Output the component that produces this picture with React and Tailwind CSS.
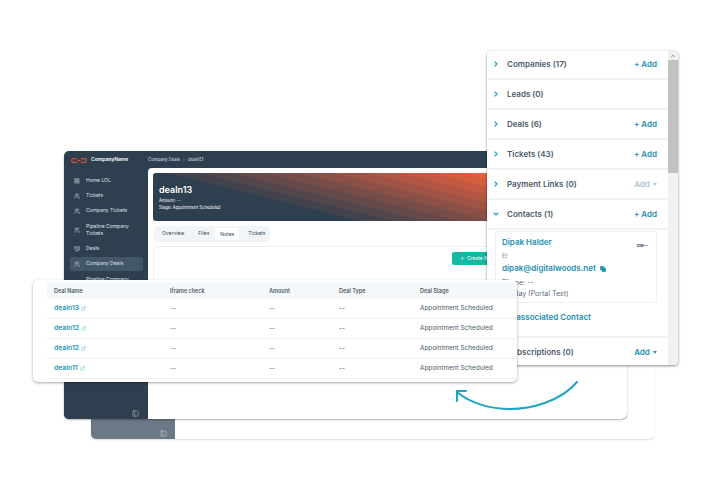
import { ChevronRight, ChevronDown, ExternalLink, Copy, Users, LayoutGrid, PanelLeft, Handshake, Plus, ChevronUp } from 'lucide-react';

const NAV = [
  { label: 'Home LOL', Icon: LayoutGrid },
  { label: 'Tickets', Icon: Users },
  { label: 'Company Tickets', Icon: Users },
  { label: 'Pipeline Company Tickets', Icon: Users },
  { label: 'Deals', Icon: Handshake },
  { label: 'Company Deals', Icon: Users, active: true },
  { label: 'Pipeline Company Deals', Icon: Users },
];

const DEALS = ['dealn13', 'dealn12', 'dealn12', 'dealn11'];

const SECTIONS = [
  { label: 'Companies (17)', add: true },
  { label: 'Leads (0)' },
  { label: 'Deals (6)', add: true },
  { label: 'Tickets (43)', add: true },
  { label: 'Payment Links (0)', menu: 'muted' },
];

function Logo() {
  return (
    <svg width="16" height="5" viewBox="0 0 16 5" fill="none" stroke="#dc4c33" strokeWidth="1.300">
      <path d="M6 .7H2.200a1.500 1.500 0 0 0-1.500 1.500v.6a1.500 1.500 0 0 0 1.500 1.500H6" />
      <path d="M10 .7h3.800a1.500 1.500 0 0 1 1.500 1.500v.6a1.500 1.500 0 0 1-1.500 1.500H10" />
      <path d="M6.500 2.500h3" />
    </svg>
  );
}

function Sidebar() {
  return (
    <aside className="w-[84px] shrink-0 bg-[#2e3f50] pl-[6px] pr-[5px] pt-[6px] relative">
      {NAV.map(({ label, Icon, active }) => (
        <div
          key={label}
          className={`flex items-center gap-[6px] pl-[4px] py-[3px] mb-[1.700px] rounded-[2px] text-[5px] leading-[7.500px] text-[#dfe5ea] ${active ? 'bg-[#43566a]' : ''}`}
        >
          <Icon className="w-[6px] h-[6px] shrink-0 text-[#cbd3da]" />
          <span>{label}</span>
        </div>
      ))}
    </aside>
  );
}

function MainWindow() {
  return (
    <div className="absolute left-[64px] top-[151px] w-[563px] h-[268px] rounded-[5px] bg-[#2e3f50] shadow-[0_1px_2px_rgba(0,0,0,0.3)] overflow-hidden flex flex-col">
      <div className="h-[17px] shrink-0 flex items-center pt-[1px] text-white">
        <div className="w-[84px] pl-[7px] flex items-center gap-[4px] text-[5px] font-semibold">
          <Logo />
          <span>CompanyName</span>
        </div>
        <div className="text-[4.300px] text-[#dfe5ea] flex items-center gap-[2px]">
          <span>Company Deals</span>
          <ChevronRight className="w-[4px] h-[4px]" />
          <span>dealn13</span>
        </div>
      </div>
      <div className="flex flex-1">
        <Sidebar />
        <div className="flex-1 bg-white rounded-tl-[4px] pl-[5px] pr-[5px] pt-[5px]">
          <div className="h-[48px] rounded-[3px] pl-[6px] pt-[11px] text-white bg-[linear-gradient(14deg,#2e3f50_50px,#41424e_50px,#41424e_58px,#53464c_58px,#53464c_66px,#66494a_66px,#66494a_74px,#784c48_74px,#784c48_82px,#8b5046_82px,#8b5046_90px,#9e5344_90px,#9e5344_98px,#b05642_98px,#b05642_106px,#c35940_106px,#c35940_114px,#d55d3e_114px,#d55d3e_122px,#e8603c_122px)]">
            <div className="text-[9px] leading-[11px] font-semibold">dealn13</div>
            <div className="text-[4.200px] leading-[7px] mt-[2px]">Amount: --</div>
            <div className="text-[4.200px] leading-[7px]">Stage: Appointment Scheduled</div>
          </div>
          <div className="mt-[5px] ml-[1px] w-[116px] h-[16px] rounded-[3px] bg-[#f2f5f8] flex items-center text-[5px] text-[#33475b]">
            <span className="px-[8px]">Overview</span>
            <span className="px-[6px]">Files</span>
            <span className="px-[5px] py-[3.500px] leading-[5px] bg-white rounded-[2px]">Notes</span>
            <span className="pl-[9px]">Tickets</span>
          </div>
          <div className="mt-[4px] h-[100px] border border-[#eef1f4] rounded-[3px] flex justify-end items-start pt-[5px] pr-[77px]">
            <div className="h-[13px] w-[92px] rounded-[2px] bg-[#14b8a3] text-white text-[5px] flex items-center gap-[2px] pl-[8px]">
              <Plus className="w-[5px] h-[5px]" />
              <span>Create Note</span>
            </div>
          </div>
        </div>
      </div>
      <PanelLeft className="absolute left-[68px] bottom-[2px] w-[7px] h-[7px] text-[#aab4bd]" />
    </div>
  );
}

function BackWindow() {
  return (
    <div className="absolute left-[91px] top-[171px] w-[563px] h-[268px] rounded-[5px] bg-white shadow-[0_1px_2px_rgba(0,0,0,0.15)] overflow-hidden flex">
      <div className="w-[84px] bg-[#6b7885] flex items-end justify-end pr-[8px] pb-[2px]">
        <PanelLeft className="w-[7px] h-[7px] text-[#c3cad0]" />
      </div>
    </div>
  );
}

function DealTable() {
  const cols = 'grid grid-cols-[116px_99px_70px_81px_1fr] pl-[7px] items-center';
  return (
    <div className="absolute left-[33px] top-[280px] w-[484px] h-[102px] rounded-[5px] bg-white shadow-[0_1px_3px_rgba(0,0,0,0.35)] pl-[14px] pt-[3px]">
      <div className={`${cols} h-[16px] bg-[#f5f8fa] text-[5.500px] font-semibold text-[#4b5a69]`}>
        <span>Deal Name</span>
        <span>Iframe check</span>
        <span>Amount</span>
        <span>Deal Type</span>
        <span>Deal Stage</span>
      </div>
      {DEALS.map((name, i) => (
        <div key={i} className={`${cols} h-[20px] border-b border-[#eef1f4] text-[6.400px] text-[#4b5a69]`}>
          <span className="flex items-center gap-[2px] text-[#1a94b5] text-[6.800px] font-semibold">
            {name}
            <ExternalLink className="w-[5px] h-[5px] text-[#5fb4cc]" />
          </span>
          <span>--</span>
          <span>--</span>
          <span>--</span>
          <span>Appointment Scheduled</span>
        </div>
      ))}
    </div>
  );
}

function Section({ label, add, menu, open }) {
  const Chevron = open ? ChevronDown : ChevronRight;
  return (
    <div className="h-[30px] shrink-0 flex items-center border-b-2 border-[#f0f3f6] pl-[5px] pr-[11px]">
      <Chevron className="w-[8px] h-[8px] text-[#1a9fc4] mr-[7px]" strokeWidth={3.500} />
      <span className="flex-1 text-[8px] font-semibold text-[#4b5a69]">{label}</span>
      {add && <span className="text-[8px] font-semibold text-[#1a8fb0]">+ Add</span>}
      {menu && (
        <span className={`text-[8px] font-semibold ${menu === 'muted' ? 'text-[#a9c6d2]' : 'text-[#1a8fb0]'}`}>
          Add <span className="text-[4px] align-[1px] ml-[1px]">▼</span>
        </span>
      )}
    </div>
  );
}

function RightPanel() {
  return (
    <div className="absolute left-[487px] top-[51px] w-[191px] h-[314px] rounded-[4px] bg-white shadow-[0_1px_3px_rgba(0,0,0,0.45)] overflow-hidden flex">
      <div className="flex-1 flex flex-col mt-[-1px]">
        {SECTIONS.map((s) => (
          <Section key={s.label} {...s} />
        ))}
        <Section label="Contacts (1)" add open />
        <div className="shrink-0 ml-[8px] mr-[11px] mt-[1px] h-[72px] border border-[#eef1f4] rounded-[2px] pl-[6px] pt-[5px] relative">
          <div className="text-[8px] leading-[11px] font-semibold text-[#1a8fb0]">Dipak Halder</div>
          <div className="text-[6px] leading-[8px] mt-[4px] text-[#7c8b99]">Er</div>
          <div className="flex items-center gap-[4px] text-[8px] leading-[11px] mt-[3px] font-semibold text-[#1a8fb0]">
            dipak@digitalwoods.net
            <Copy className="w-[6px] h-[6px] fill-[#1a8fb0]" strokeWidth={3} />
          </div>
          <div className="text-[7px] leading-[8px] mt-[5px] text-[#5b6b7a]">Phone: --</div>
          <div className="text-[7px] leading-[8px] mt-[3px] text-[#5b6b7a]">Payday (Portal Test)</div>
          <span className="absolute right-[8px] top-[11px] text-[4px] font-bold text-[#33475b]">DW—</span>
        </div>
        <div className="shrink-0 pl-[8px] mt-[8px] h-[25px] text-[8px] font-semibold text-[#1a8fb0]">View associated Contact</div>
        <div className="shrink-0 border-t-2 border-[#f0f3f6]">
          <Section label="Subscriptions (0)" menu="active" />
        </div>
      </div>
      <div className="w-[10px] shrink-0 bg-[#f1f1f1] flex flex-col">
        <div className="h-[9px] flex items-center justify-center">
          <ChevronUp className="w-[6px] h-[6px] text-[#8a8a8a]" strokeWidth={4} />
        </div>
        <div className="h-[113px] bg-[#c1c1c1]" />
      </div>
    </div>
  );
}

function Arrow() {
  return (
    <svg className="absolute left-[450px] top-[375px]" width="135" height="45" viewBox="450 375 135 45" fill="none" stroke="#1ea5c4" strokeWidth="2" strokeLinecap="round" strokeLinejoin="round">
      <path d="M577 382C560 402 530 409 510 409C490 409 470 403 457 392" />
      <path d="M466 391L457 391L457 401" />
    </svg>
  );
}

export default function App() {
  return (
    <div className="relative w-[710px] h-[497px] bg-white overflow-hidden font-['Inter','Liberation_Sans',sans-serif]">
      <BackWindow />
      <MainWindow />
      <RightPanel />
      <DealTable />
      <Arrow />
    </div>
  );
}
